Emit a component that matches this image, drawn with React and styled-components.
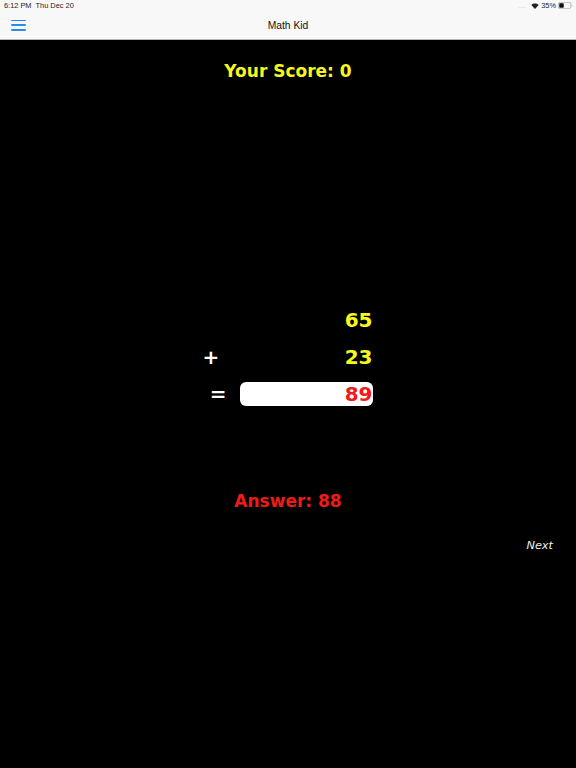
import React from "react";
import styled, { createGlobalStyle } from "styled-components";

const Global = createGlobalStyle`
html, body {
  margin: 0;
  padding: 0;
  background: #000;
}
`

const Page = styled.div`
width: 576px;
height: 768px;
background: #000;
display: flex;
flex-direction: column;
overflow: hidden;
font-family: "DejaVu Sans", sans-serif;
`
const TopBar = styled.header`
height: 39px;
flex: none;
background: #f8f8f8;
border-bottom: 1px solid #b8b8b8;
display: flex;
flex-direction: column;
`
const StatusBar = styled.div`
height: 11px;
padding: 0 3px 0 4px;
display: flex;
align-items: center;
justify-content: space-between;
font-family: "Liberation Sans", sans-serif;
font-size: 7.4px;
color: #222;
`
const StatusGroup = styled.div`
display: flex;
align-items: center;
gap: ${(p) => p.$gap}px;
`
const NavBar = styled.div`
flex: 1;
display: grid;
grid-template-columns: 1fr auto 1fr;
align-items: center;
padding: 0 11px;
`
const Title = styled.div`
font-family: "Liberation Sans", sans-serif;
font-size: 10.3px;
font-weight: 500;
color: #111;
`
const MenuButton = styled.button`
width: 15px;
height: 11px;
padding: 0;
border: none;
background: none;
display: flex;
flex-direction: column;
justify-content: space-between;
`
const MenuLine = styled.span`
display: block;
height: 1.6px;
border-radius: 1px;
background: #2a8ae6;
`
const Dots = styled.span`
color: #aaa;
font-size: 6px;
letter-spacing: 0.3px;
margin-right: 3px;
`
const Score = styled.div`
margin-top: 20px;
height: 22px;
line-height: 22px;
text-align: center;
font-size: 17px;
font-weight: bold;
color: #f7f71f;
`
const Sum = styled.div`
margin-top: 219px;
align-self: center;
display: grid;
grid-template-columns: 42px 133px;
grid-auto-rows: 37px;
margin-left: -6px;
align-items: center;
`
const Sign = styled.div`
font-size: 20px;
font-weight: bold;
color: #fff;
text-align: ${(p) => p.$align};
padding: ${(p) => p.$pad};
`
const Num = styled.div`
grid-column: 2;
text-align: right;
font-size: 20px;
font-weight: bold;
color: #f7f71f;
`
const AnswerBox = styled.div`
height: 24px;
background: #fff;
border-radius: 6px;
text-align: right;
line-height: 24px;
font-size: 20px;
font-weight: bold;
color: #f01a1a;
`
const Answer = styled.div`
margin-top: 77px;
height: 24px;
line-height: 24px;
text-align: center;
font-size: 17px;
font-weight: bold;
color: #ee1c14;
`
const NextRow = styled.div`
margin-top: 25px;
padding-right: 23px;
text-align: right;
font-size: 11.3px;
line-height: 16px;
font-style: italic;
color: #eee;
`

const WifiIcon = () => (
    <svg width="8" height="6" viewBox="0 0 18 14">
        <path d="M9 14 0.5 4.5C5.500 0 12.500 0 17.500 4.500Z" fill="#222"/>
    </svg>
)

const BatteryIcon = () => (
    <svg width="15" height="7" viewBox="0 0 30 14">
        <rect x="0.7" y="0.7" width="25" height="12.600" rx="3.500" fill="none" stroke="#999" strokeWidth="1.200"/>
        <rect x="2.500" y="2.500" width="9" height="9" rx="1.500" fill="#111"/>
        <path d="M27.500 4.500C29 5 29 9 27.500 9.500Z" fill="#999"/>
    </svg>
)

const App = () => {
    return(
        <Page>
            <Global/>
            <TopBar>
                <StatusBar>
                    <StatusGroup $gap={4}>
                        <span>6:12 PM</span>
                        <span>Thu Dec 20</span>
                    </StatusGroup>
                    <StatusGroup $gap={2}>
                        <Dots>....</Dots>
                        <WifiIcon/>
                        <span>35%</span>
                        <BatteryIcon/>
                    </StatusGroup>
                </StatusBar>
                <NavBar>
                    <MenuButton aria-label="Menu">
                        <MenuLine/>
                        <MenuLine/>
                        <MenuLine/>
                    </MenuButton>
                    <Title>Math Kid</Title>
                </NavBar>
            </TopBar>
            <Score>Your Score: 0</Score>
            <Sum>
                <Num>65</Num>
                <Sign $align="left" $pad="0 0 0 5px">+</Sign>
                <Num>23</Num>
                <Sign $align="right" $pad="0 13px 0 0">=</Sign>
                <AnswerBox>89</AnswerBox>
            </Sum>
            <Answer>Answer: 88</Answer>
            <NextRow>Next</NextRow>
        </Page>
    )
}

export default App;
